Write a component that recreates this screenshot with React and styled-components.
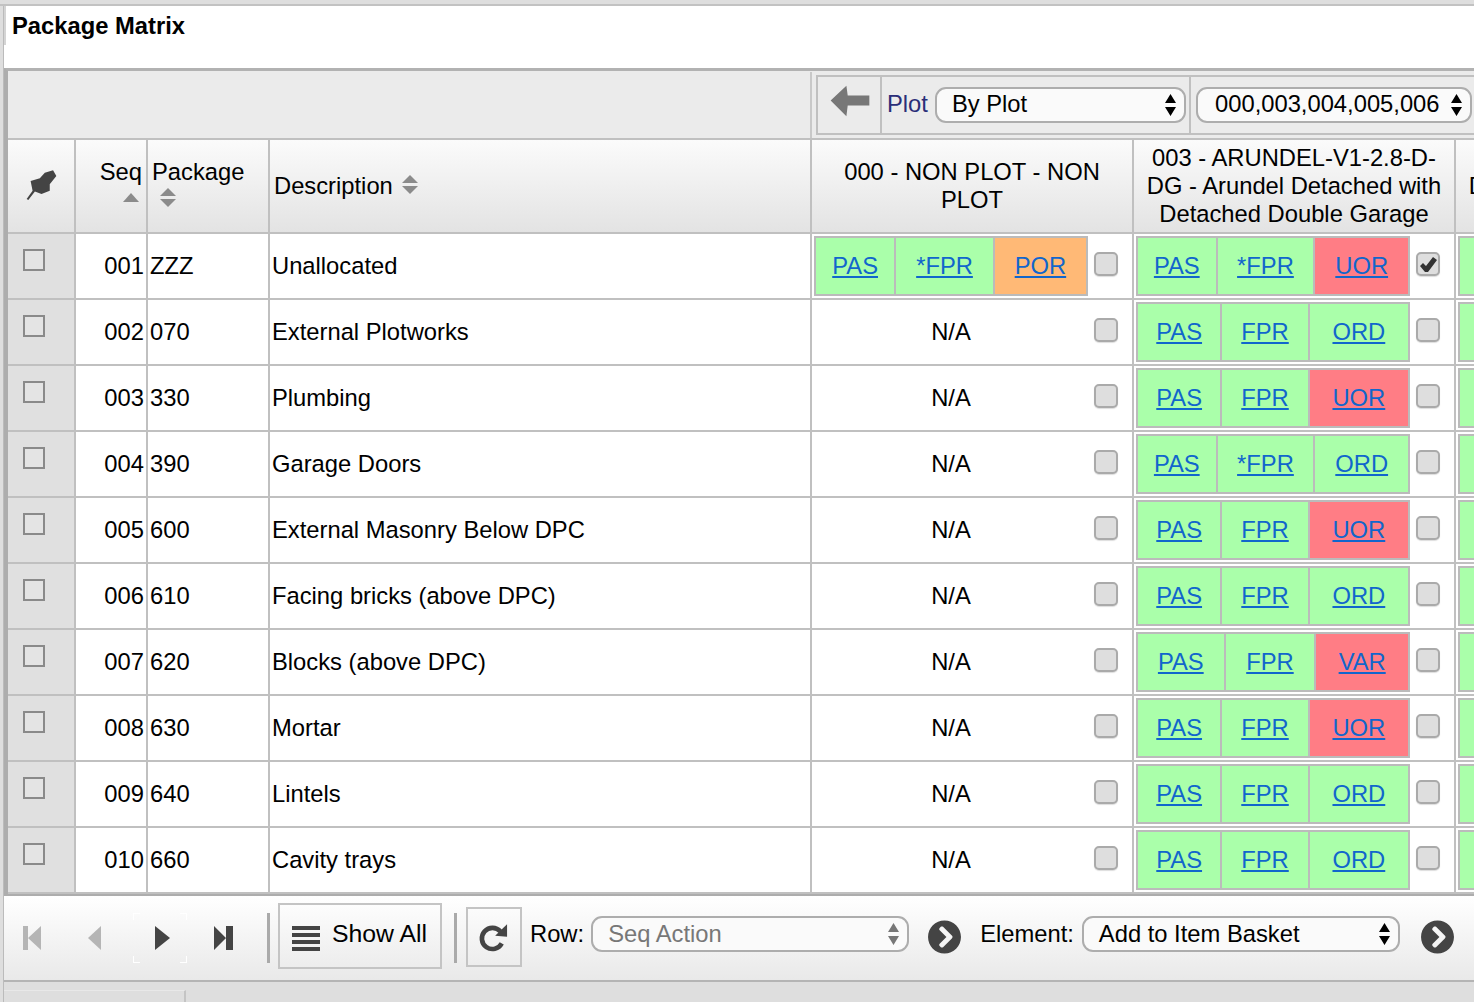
import React from "react";
import styled, { createGlobalStyle } from "styled-components";
import { FaChevronCircleRight } from "react-icons/fa";

const GlobalStyle = createGlobalStyle`
  html, body {
    margin: 0;
    padding: 0;
    height: 1002px;
    overflow: hidden;
    background: #dedede;
    font-family: "Liberation Sans", Arial, sans-serif;
    font-size: 23.75px;
    color: #000;
  }
`;

const COLUMNS = "68px 72px 122px 542px 322px 322px 322px";

const Page = styled.div`
  width: 1474px;
  height: 1002px;
  overflow: hidden;
`;
const TopStrip = styled.div`
  height: 4px;
  border-bottom: 2px solid #c2c2c2;
`;
const TitleBar = styled.div`
  height: 62px;
  margin-left: 3px;
  padding-left: 8px;
  border-left: 1px solid #bbb;
  background: linear-gradient(#d4d4d4, #d4d4d4) 0 0 / 2px 39px no-repeat, #fff;
  font-weight: bold;
  line-height: 40px;
`;
const Panel = styled.div`
  margin-left: 3px;
  border-left: 1px solid #bbb;
`;
const Matrix = styled.div`
  width: 1500px;
  border-top: 3px solid #b2b2b2;
  border-left: 4px solid #adadad;
  border-bottom: 2px solid #adadad;
  padding-top: 1px;
  background: #ebebeb;
`;
const FilterRow = styled.div`
  display: grid;
  grid-template-columns: 804px 1fr;
  height: 66px;
  border-bottom: 2px solid #c0c0c0;
  box-sizing: content-box;
`;
const FilterBlank = styled.div`
  border-right: 2px solid #c8c8c8;
`;
const FilterBox = styled.div`
  display: flex;
  height: 60px;
  margin: 3px 0 0 4px;
  border: 2px solid #c0c0c0;
  box-sizing: border-box;
`;
const FilterCell = styled.div`
  display: flex;
  align-items: center;
  box-sizing: border-box;
  width: ${(p) => p.$width}px;
  padding-left: ${(p) => p.$pad || 0}px;
  border-right: 2px solid #c0c0c0;
`;
const BackIcon = styled.svg`
  width: 40px;
  height: 32px;
  margin-top: -8px;
  fill: #777;
`;
const PlotLabel = styled.span`
  color: #2a2e78;
  margin: -2px 7px 0 0;
`;
const SelectBox = styled.div`
  display: flex;
  align-items: center;
  justify-content: space-between;
  box-sizing: border-box;
  width: ${(p) => p.$width}px;
  height: 36px;
  padding: 0 8px 0 ${(p) => p.$left || 15}px;
  margin-top: ${(p) => p.$top || 0}px;
  border: 2px solid #adadad;
  border-radius: 11px;
  background: #fafafa;
  color: ${(p) => (p.$muted ? "#777" : "#000")};
  white-space: nowrap;
`;
const SelectText = styled.span`
  margin-top: ${(p) => (p.$raise ? -2 : 0)}px;
`;
const SelectArrows = styled.svg`
  width: 11px;
  height: 22px;
  flex: none;
`;

const HeaderRow = styled.div`
  display: grid;
  grid-template-columns: ${COLUMNS};
  height: 92px;
  border-bottom: 2px solid #c0c0c0;
  background: linear-gradient(#fbfbfb, #e3e3e3);
  overflow: hidden;
`;
const HeadCell = styled.div`
  box-sizing: border-box;
  border-right: 2px solid #c0c0c0;
  line-height: 28px;
  display: flex;
`;
const PinCell = styled(HeadCell)`
  align-items: center;
  justify-content: center;
`;
const PinIcon = styled.svg`
  width: 33px;
  height: 32px;
  margin: -3px 0 0 0;
  fill: #444;
`;
const SeqHead = styled(HeadCell)`
  flex-direction: column;
  align-items: flex-end;
  padding: 18px 4px 0 0;
`;
const PackageHead = styled(HeadCell)`
  flex-direction: column;
  align-items: flex-start;
  padding: 18px 0 0 4px;
`;
const DescHead = styled(HeadCell)`
  align-items: center;
  padding: 0 0 0 4px;
  gap: 8px;
`;
const SortIcon = styled.svg`
  width: 18px;
  height: 20px;
  fill: #8b8b8b;
  margin-top: ${(p) => p.$top || 0}px;
  margin-left: ${(p) => p.$left || 0}px;
  margin-right: ${(p) => p.$right || 0}px;
`;
const PlotHead = styled(HeadCell)`
  align-items: center;
  justify-content: center;
  text-align: center;
  padding: 0 10px;
`;

const Row = styled.div`
  display: grid;
  grid-template-columns: ${COLUMNS};
  height: 64px;
  border-bottom: 2px solid #c0c0c0;
  background: #fff;
  overflow: hidden;
`;
const Cell = styled.div`
  box-sizing: border-box;
  border-right: 2px solid #c0c0c0;
  display: flex;
  align-items: center;
`;
const SelectCell = styled(Cell)`
  align-items: flex-start;
  padding: 15px 0 0 15px;
  background: #e0e0e0;
`;
const SeqCell = styled(Cell)`
  justify-content: flex-end;
  padding-right: 2px;
`;
const TextCell = styled(Cell)`
  padding-left: 2px;
`;
const RowBox = styled.span`
  box-sizing: border-box;
  width: 22px;
  height: 22px;
  border: 2px solid #8a8a8a;
  background: #e4e4e4;
`;
const PlotCell = styled(Cell)`
  padding: 0 0 0 2px;
`;
const ChipTable = styled.table`
  width: 274px;
  height: 60px;
  border-collapse: collapse;
  border: 2px solid #bbb;
  flex: none;
  box-sizing: border-box;
`;
const Chip = styled.td`
  padding: 0;
  border: 2px solid #bbb;
  text-align: center;
  background: ${(p) => p.$bg};
  &:last-child {
    padding: 0 1px;
  }
`;
const ChipLink = styled.a`
  color: #1166cc;
  text-decoration: underline;
`;
const NotApplicable = styled.div`
  width: 274px;
  flex: none;
  text-align: center;
`;
const CheckBox = styled.span`
  display: flex;
  align-items: center;
  justify-content: center;
  box-sizing: border-box;
  flex: none;
  width: 24px;
  height: 24px;
  margin: -4px 0 0 6px;
  border: 2px solid #aaa;
  border-radius: 5px;
  background: #dedede;
  box-shadow: 0 1px 1px #ddd;
`;
const Tick = styled.svg`
  width: 18px;
  height: 18px;
  fill: #333;
`;

const Toolbar = styled.div`
  display: flex;
  align-items: center;
  box-sizing: border-box;
  height: 86px;
  padding-bottom: 4px;
  background: linear-gradient(#fff, #e9e9e9);
  border-bottom: 2px solid #b4b4b4;
`;
const NavGroup = styled.div`
  display: flex;
  gap: 10px;
  margin-left: 1px;
`;
const NavButton = styled.span`
  display: flex;
  align-items: center;
  justify-content: center;
  width: 54px;
  height: 50px;
  margin-top: 4px;
  color: ${(p) => (p.$off ? "#b5b5b5" : "#444")};
  ${(p) =>
    p.$focus &&
    `background:
      linear-gradient(#fff,#fff) 0 0/7px 1px no-repeat,
      linear-gradient(#fff,#fff) 0 0/1px 7px no-repeat,
      linear-gradient(#fff,#fff) 100% 0/7px 1px no-repeat,
      linear-gradient(#fff,#fff) 100% 0/1px 7px no-repeat,
      linear-gradient(#fff,#fff) 0 100%/7px 1px no-repeat,
      linear-gradient(#fff,#fff) 0 100%/1px 7px no-repeat,
      linear-gradient(#fff,#fff) 100% 100%/7px 1px no-repeat,
      linear-gradient(#fff,#fff) 100% 100%/1px 7px no-repeat;`}
`;
const NavGlyph = styled.svg`
  width: 20px;
  height: 24px;
  fill: currentColor;
`;
const Separator = styled.span`
  width: 3px;
  height: 50px;
  margin: 4px 0 0 ${(p) => p.$left}px;
  background: #aaa;
`;
const ShowAll = styled.div`
  display: flex;
  align-items: center;
  gap: 12px;
  box-sizing: border-box;
  width: 164px;
  height: 66px;
  margin-left: 8px;
  padding: 0 0 0 12px;
  border: 2px solid #c4c4c4;
`;
const ShowAllText = styled.span`
  margin-top: -5px;
  font-size: 24.8px;
`;
const ListIcon = styled.svg`
  width: 28px;
  height: 26px;
  margin-top: 4px;
  fill: #444;
`;
const Refresh = styled.div`
  display: flex;
  align-items: center;
  justify-content: center;
  box-sizing: border-box;
  width: 56px;
  height: 60px;
  margin: 2px 0 0 9px;
  border: 2px solid #c4c4c4;
`;
const RefreshIcon = styled.svg`
  width: 32px;
  height: 33px;
  fill: #444;
  stroke: #444;
`;
const BarLabel = styled.span`
  margin-left: ${(p) => p.$left}px;
  margin-right: ${(p) => p.$right}px;
  margin-top: -4px;
`;
const GoIcon = styled(FaChevronCircleRight)`
  width: 35px;
  height: 34px;
  margin: 2px 0 0 ${(p) => p.$left}px;
  color: #444;
`;
const Footer = styled.div`
  height: 20px;
  padding-top: 8px;
  box-sizing: border-box;
`;
const FooterTab = styled.div`
  width: 180px;
  height: 12px;
  border-top: 1px solid #e8e8e8;
  border-right: 2px solid #c4c4c4;
`;

const GREEN = "#aaffaa";
const RED = "#ff7d85";
const ORANGE = "#ffb976";

const rows = [
  { seq: "001", pkg: "ZZZ", desc: "Unallocated", first: [["PAS", GREEN], ["*FPR", GREEN], ["POR", ORANGE]], chips: [["PAS", GREEN], ["*FPR", GREEN], ["UOR", RED]], checked: true },
  { seq: "002", pkg: "070", desc: "External Plotworks", chips: [["PAS", GREEN], ["FPR", GREEN], ["ORD", GREEN]] },
  { seq: "003", pkg: "330", desc: "Plumbing", chips: [["PAS", GREEN], ["FPR", GREEN], ["UOR", RED]] },
  { seq: "004", pkg: "390", desc: "Garage Doors", chips: [["PAS", GREEN], ["*FPR", GREEN], ["ORD", GREEN]] },
  { seq: "005", pkg: "600", desc: "External Masonry Below DPC", chips: [["PAS", GREEN], ["FPR", GREEN], ["UOR", RED]] },
  { seq: "006", pkg: "610", desc: "Facing bricks (above DPC)", chips: [["PAS", GREEN], ["FPR", GREEN], ["ORD", GREEN]] },
  { seq: "007", pkg: "620", desc: "Blocks (above DPC)", chips: [["PAS", GREEN], ["FPR", GREEN], ["VAR", RED]] },
  { seq: "008", pkg: "630", desc: "Mortar", chips: [["PAS", GREEN], ["FPR", GREEN], ["UOR", RED]] },
  { seq: "009", pkg: "640", desc: "Lintels", chips: [["PAS", GREEN], ["FPR", GREEN], ["ORD", GREEN]] },
  { seq: "010", pkg: "660", desc: "Cavity trays", chips: [["PAS", GREEN], ["FPR", GREEN], ["ORD", GREEN]] },
];

const Arrows = () => (
  <SelectArrows viewBox="0 0 11 22">
    <path d="M5.5 0 L11 9 H0 Z M5.5 22 L0 13 H11 Z" fill="currentColor" />
  </SelectArrows>
);

const Select = ({ children, ...rest }) => (
  <SelectBox {...rest}>
    <SelectText $raise={!rest.$top}>{children}</SelectText>
    <Arrows />
  </SelectBox>
);

const Chips = ({ items }) => (
  <ChipTable>
    <tbody>
      <tr>
        {items.map(([label, bg]) => (
          <Chip key={label} $bg={bg}>
            <ChipLink href="#">{label}</ChipLink>
          </Chip>
        ))}
      </tr>
    </tbody>
  </ChipTable>
);

const Check = ({ on }) => (
  <CheckBox>
    {on && (
      <Tick viewBox="0 0 18 18">
        <path d="M1 11 L6 17 L9 17 L18 5 L14 2 L7 11 L4 8 Z" />
      </Tick>
    )}
  </CheckBox>
);

const App = () => {
  return (
    <Page>
      <GlobalStyle />
      <TopStrip />
      <TitleBar>Package Matrix</TitleBar>
      <Panel>
        <Matrix>
          <FilterRow>
            <FilterBlank />
            <FilterBox>
              <FilterCell $width={64} $pad={12}>
                <BackIcon viewBox="28 23 122 97">
                  <path d="M30 70 L78 25 L82 55 H148 V85 H82 L78 118 Z" />
                </BackIcon>
              </FilterCell>
              <FilterCell $width={309} $pad={5}>
                <PlotLabel>Plot</PlotLabel>
                <Select $width={251}>By Plot</Select>
              </FilterCell>
              <FilterCell $width={290} $pad={5}>
                <Select $width={276} $left={17}>000,003,004,005,006</Select>
              </FilterCell>
            </FilterBox>
          </FilterRow>
          <HeaderRow>
            <PinCell>
              <PinIcon viewBox="25 25 100 95">
                <path d="M30 115 L48 90 L42 60 L70 52 L85 35 L110 28 L120 45 L100 70 L100 90 L75 100 L55 92 L35 118 Z" />
              </PinIcon>
            </PinCell>
            <SeqHead>
              Seq
              <SortIcon viewBox="0 0 18 20" $top={4} $right={2}>
                <path d="M9 3 L17 12 H1 Z" />
              </SortIcon>
            </SeqHead>
            <PackageHead>
              Package
              <SortIcon viewBox="0 0 18 20" $top={2} $left={7}>
                <path d="M9 0 L17 8 H1 Z M9 19 L1 11 H17 Z" />
              </SortIcon>
            </PackageHead>
            <DescHead>
              Description
              <SortIcon viewBox="0 0 18 20" $top={-2}>
                <path d="M9 0 L17 8 H1 Z M9 19 L1 11 H17 Z" />
              </SortIcon>
            </DescHead>
            <PlotHead>000 - NON PLOT - NON PLOT</PlotHead>
            <PlotHead>003 - ARUNDEL-V1-2.8-D-DG - Arundel Detached with Detached Double Garage</PlotHead>
            <PlotHead>004 - ARUNDEL-V1-2.8-D-DG - Arundel Detached with Detached Double Garage</PlotHead>
          </HeaderRow>
          {rows.map((r) => (
            <Row key={r.seq}>
              <SelectCell>
                <RowBox />
              </SelectCell>
              <SeqCell>{r.seq}</SeqCell>
              <TextCell>{r.pkg}</TextCell>
              <TextCell>{r.desc}</TextCell>
              <PlotCell>
                {r.first ? <Chips items={r.first} /> : <NotApplicable>N/A</NotApplicable>}
                <Check />
              </PlotCell>
              <PlotCell>
                <Chips items={r.chips} />
                <Check on={r.checked} />
              </PlotCell>
              <PlotCell>
                <Chips items={r.chips} />
              </PlotCell>
            </Row>
          ))}
        </Matrix>
        <Toolbar>
          <NavGroup>
            <NavButton $off>
              <NavGlyph viewBox="0 0 20 24">
                <path d="M1 0 H6 V24 H1 Z M19 0 V24 L6 12 Z" />
              </NavGlyph>
            </NavButton>
            <NavButton $off>
              <NavGlyph viewBox="0 0 20 24">
                <path d="M15 0 V24 L2 12 Z" />
              </NavGlyph>
            </NavButton>
            <NavButton $focus>
              <NavGlyph viewBox="0 0 20 24">
                <path d="M5 0 L20 12 L5 24 Z" />
              </NavGlyph>
            </NavButton>
            <NavButton>
              <NavGlyph viewBox="0 0 20 24">
                <path d="M0 0 L12 12 L0 24 Z M12 0 H19 V24 H12 Z" />
              </NavGlyph>
            </NavButton>
          </NavGroup>
          <Separator $left={16} />
          <ShowAll>
            <ListIcon viewBox="0 0 28 26">
              <rect y="1" width="28" height="4" />
              <rect y="8" width="28" height="4" />
              <rect y="15" width="28" height="4" />
              <rect y="22" width="28" height="4" />
            </ListIcon>
            <ShowAllText>Show All</ShowAllText>
          </ShowAll>
          <Separator $left={12} />
          <Refresh>
            <RefreshIcon viewBox="25 20 95 100">
              <path d="M92 52 A 32 32 0 1 0 96 88" fill="none" strokeWidth="14" />
              <path d="M112 30 L112 68 L76 65 Z" stroke="none" />
            </RefreshIcon>
          </Refresh>
          <BarLabel $left={8} $right={7}>Row:</BarLabel>
          <Select $width={318} $muted $top={-4}>Seq Action</Select>
          <GoIcon $left={18} />
          <BarLabel $left={18} $right={8}>Element:</BarLabel>
          <Select $width={318} $top={-4}>Add to Item Basket</Select>
          <GoIcon $left={20} />
        </Toolbar>
        <Footer>
          <FooterTab />
        </Footer>
      </Panel>
    </Page>
  );
};

export default App;
